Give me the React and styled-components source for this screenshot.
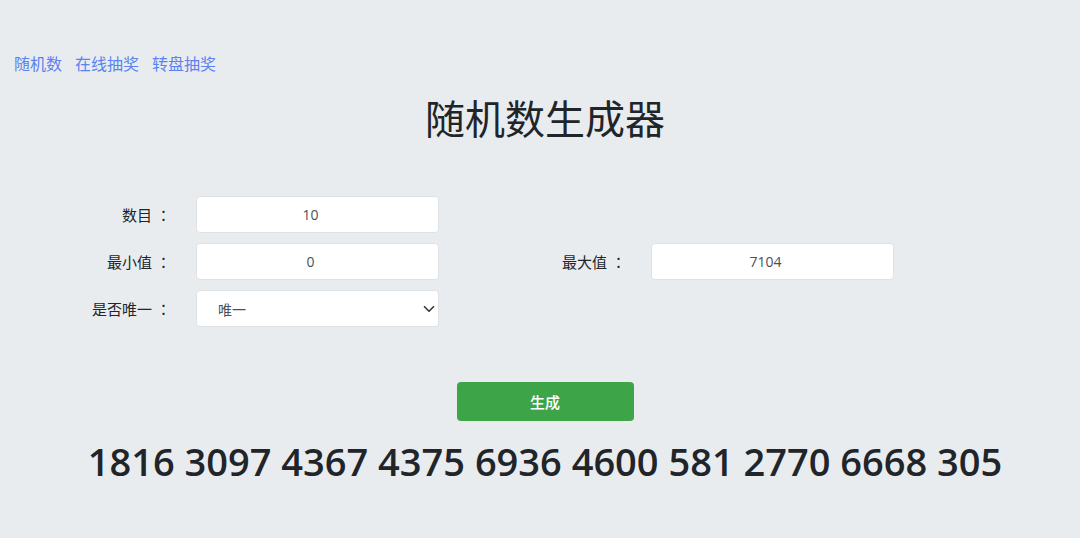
import React from 'react'
import styled, { createGlobalStyle } from 'styled-components';

const GlobalStyle = createGlobalStyle`
  html, body {
    margin: 0;
    padding: 0;
    background: #e9ecef;
  }
  body {
    font-family: "Noto Sans", "Noto Sans CJK SC", sans-serif;
    color: #212529;
  }
`;

const Page = styled.div`
  min-height: 538px;
  padding-top: 51px;
  box-sizing: border-box;
`;

const Nav = styled.nav`
  display: flex;
  gap: 13px;
  padding-left: 14px;
  height: 24px;
  align-items: center;
`;

const NavLink = styled.a`
  font-family: "Noto Sans CJK SC", sans-serif;
  font-size: 16px;
  color: #5a82f0;
  text-decoration: none;
  cursor: pointer;
`;

const Centered = styled.div`
  padding-left: 10px;
  display: flex;
  justify-content: center;
`;

const Title = styled.h1`
  margin: 18px 0 0;
  font-family: "Noto Sans CJK SC", sans-serif;
  font-size: 40px;
  font-weight: 400;
  line-height: 48px;
  color: #212529;
`;

const Form = styled.div`
  display: grid;
  grid-template-columns: 196px 243px 212px 243px;
  grid-auto-rows: 37px;
  row-gap: 10px;
  margin-top: 55px;
`;

const Label = styled.label`
  grid-column: ${p => p.$col || 1};
  display: flex;
  align-items: center;
  justify-content: flex-end;
  padding-right: 29px;
  font-family: "Noto Sans CJK SC", sans-serif;
  font-size: 15px;
  color: #212529;
`;

const Colon = styled.span`
  font-family: "Noto Sans CJK TC", sans-serif;
  margin-left: 4px;
  margin-right: -4px;
`;

const Input = styled.input`
  box-sizing: border-box;
  width: 243px;
  height: 37px;
  border: 1px solid #dee2e6;
  border-radius: 4px;
  background: #fff;
  padding: 0 20px 0 6px;
  text-align: center;
  font-family: "Open Sans", "Noto Sans CJK SC", sans-serif;
  font-size: 14px;
  color: #495057;
  outline: none;
`;

const SelectWrap = styled.div`
  position: relative;
  width: 243px;
  height: 37px;
`;

const Select = styled.select`
  appearance: none;
  box-sizing: border-box;
  width: 100%;
  height: 100%;
  border: 1px solid #dee2e6;
  border-radius: 4px;
  background: #fff;
  padding: 0 30px 0 21px;
  font-family: "Noto Sans CJK SC", sans-serif;
  font-size: 14px;
  color: #495057;
  outline: none;
`;

const Chevron = styled.svg`
  position: absolute;
  right: 4px;
  top: 13px;
  pointer-events: none;
`;

const Actions = styled(Centered)`
  margin-top: 55px;
`;

const Button = styled.button`
  width: 177px;
  height: 39px;
  border: none;
  border-radius: 4px;
  background: #3da547;
  color: #fff;
  font-family: "Noto Sans CJK SC", sans-serif;
  font-size: 15px;
  font-weight: 500;
  cursor: pointer;
`;

const Result = styled(Centered)`
  margin-top: 14px;
  font-family: "Open Sans", sans-serif;
  font-size: 38px;
  font-weight: 600;
  line-height: 52px;
  color: #212529;
`;

const numbers = [1816, 3097, 4367, 4375, 6936, 4600, 581, 2770, 6668, 305];

const Field = ({ text, col }) => (
  <Label $col={col}>{text}<Colon>：</Colon></Label>
);

const App = () => {
  return (
    <Page>
      <GlobalStyle />
      <Nav>
        <NavLink>随机数</NavLink>
        <NavLink>在线抽奖</NavLink>
        <NavLink>转盘抽奖</NavLink>
      </Nav>
      <Centered>
        <Title>随机数生成器</Title>
      </Centered>
      <Form>
        <Field text="数目" />
        <Input defaultValue="10" />
        <Field text="最小值" />
        <Input defaultValue="0" />
        <Field text="最大值" col={3} />
        <Input defaultValue="7104" />
        <Field text="是否唯一" />
        <SelectWrap>
          <Select defaultValue="1">
            <option value="1">唯一</option>
            <option value="0">不唯一</option>
          </Select>
          <Chevron width="12" height="12" viewBox="0 0 16 16">
            <path d="M2 5l6 6 6-6" fill="none" stroke="#343a40" strokeWidth="2.2" strokeLinecap="round" strokeLinejoin="round" />
          </Chevron>
        </SelectWrap>
      </Form>
      <Actions>
        <Button>生成</Button>
      </Actions>
      <Result>{numbers.join(' ')}</Result>
    </Page>
  )
};
export default App;
